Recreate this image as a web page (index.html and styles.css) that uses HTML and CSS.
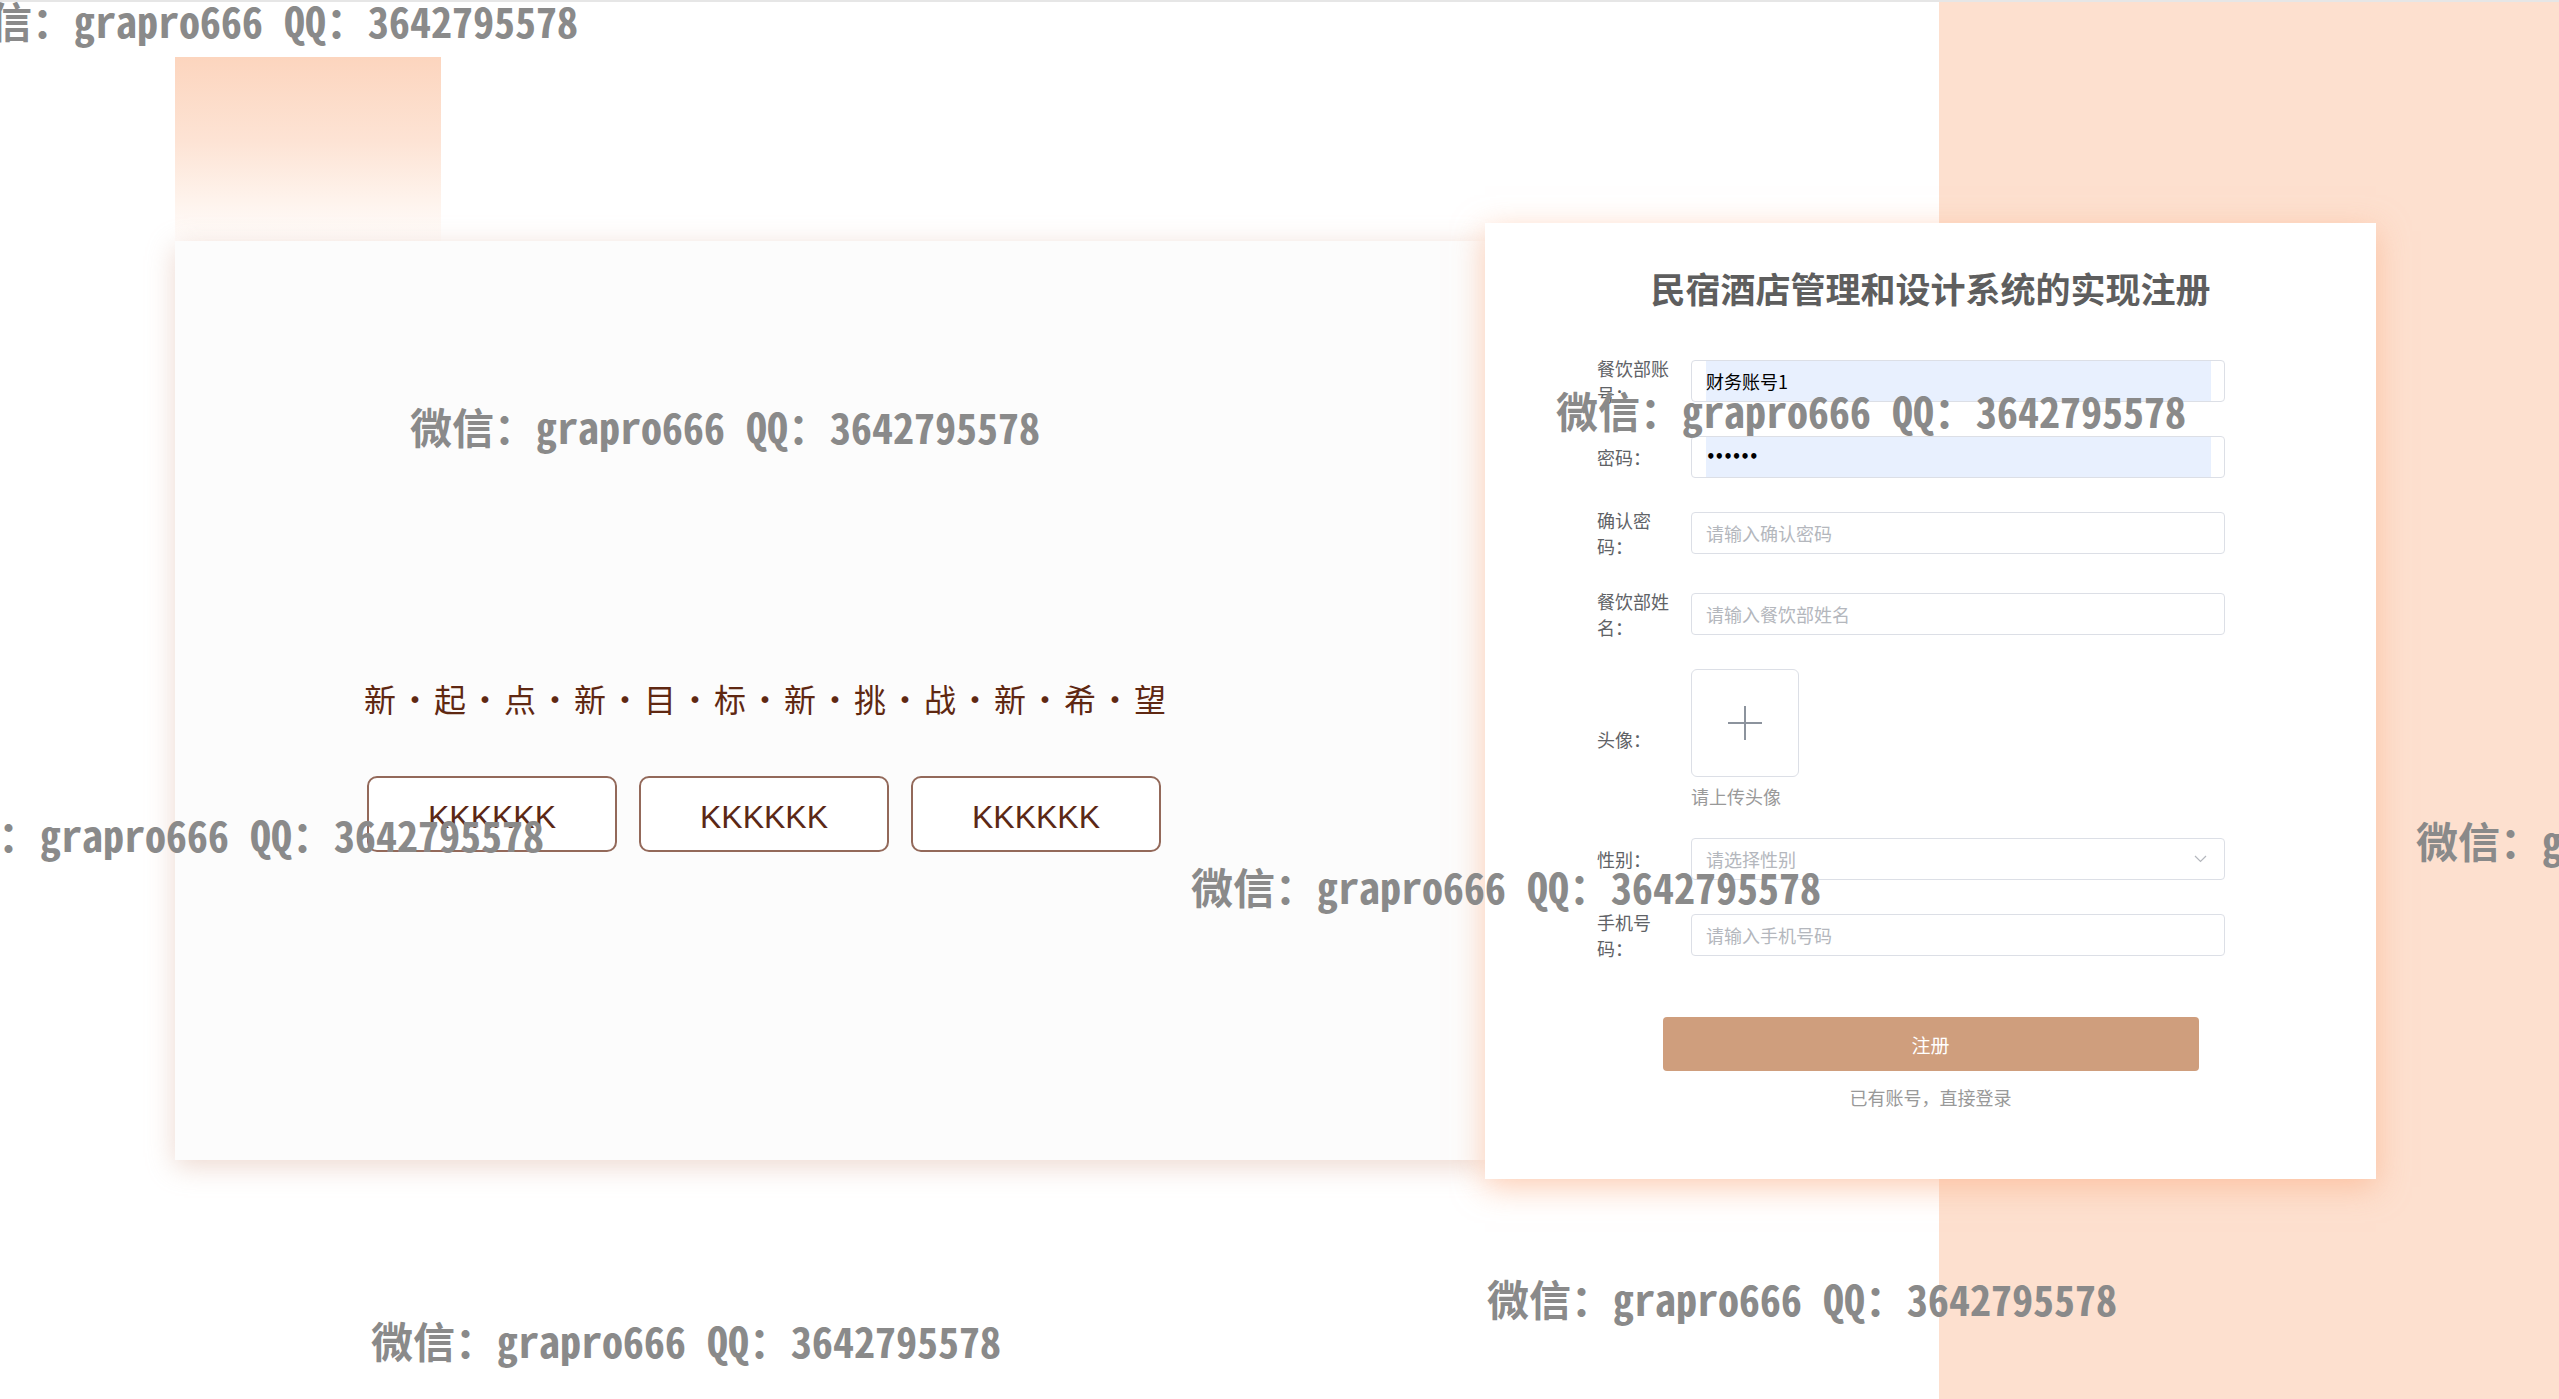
FILE: index.html
```html
<!DOCTYPE html>
<html lang="zh-CN">
<head>
<meta charset="utf-8">
<title>民宿酒店管理和设计系统的实现注册</title>
<link rel="stylesheet" href="styles.css">
</head>
<body>
<div class="page">
  <div class="row">
    <div class="left-col">
      <div class="deco"></div>
      <div class="left-card">
        <div class="slogan">新・起・点・新・目・标・新・挑・战・新・希・望</div>
        <div class="btns">
          <button class="kbtn">KKKKKK</button>
          <button class="kbtn">KKKKKK</button>
          <button class="kbtn">KKKKKK</button>
        </div>
      </div>
    </div>
    <div class="form-card">
      <h1 class="title">民宿酒店管理和设计系统的实现注册</h1>
      <div class="form">
        <div class="frow">
          <label class="flabel">餐饮部账号：</label>
          <div class="field"><span class="fill">财务账号1</span></div>
        </div>
        <div class="frow">
          <label class="flabel">密码：</label>
          <div class="field"><span class="fill dots">••••••</span></div>
        </div>
        <div class="frow">
          <label class="flabel">确认密码：</label>
          <div class="field"><span class="ph">请输入确认密码</span></div>
        </div>
        <div class="frow">
          <label class="flabel">餐饮部姓名：</label>
          <div class="field"><span class="ph">请输入餐饮部姓名</span></div>
        </div>
        <div class="frow">
          <label class="flabel">头像：</label>
          <div class="upload-wrap">
            <div class="upload">
              <svg width="36" height="36" viewBox="0 0 36 36"><path d="M18 1v34M1 18h34" stroke="#8c939d" stroke-width="2" fill="none"/></svg>
            </div>
            <div class="hint">请上传头像</div>
          </div>
        </div>
        <div class="frow">
          <label class="flabel">性别：</label>
          <div class="field select"><span class="ph">请选择性别</span>
            <svg class="chev" width="13" height="8" viewBox="0 0 13 8"><path d="M1 1l5.5 5.5L12 1" stroke="#b4b7bd" stroke-width="1.2" fill="none"/></svg>
          </div>
        </div>
        <div class="frow">
          <label class="flabel">手机号码：</label>
          <div class="field"><span class="ph">请输入手机号码</span></div>
        </div>
      </div>
      <button class="submit">注册</button>
      <div class="login-link">已有账号，直接登录</div>
    </div>
  </div>
  <div class="wm-layer">
    <div class="wm wm1">微信：grapro666 QQ：3642795578</div>
    <div class="wm wm2">微信：grapro666 QQ：3642795578</div>
    <div class="wm wm3">微信：grapro666 QQ：3642795578</div>
    <div class="wm wm4">微信：grapro666 QQ：3642795578</div>
    <div class="wm wm5">微信：grapro666 QQ：3642795578</div>
    <div class="wm wm6">微信：grapro666 QQ：3642795578</div>
    <div class="wm wm7">微信：grapro666 QQ：3642795578</div>
    <div class="wm wm8">微信：grapro666 QQ：3642795578</div>
  </div>
</div>
</body>
</html>
```

FILE: styles.css
```css
html, body {
  margin: 0;
  padding: 0;
  overflow: hidden;
}
body {
  font-family: "Noto Sans CJK SC", "Noto Sans", sans-serif;
}
.page {
  position: relative;
  box-sizing: border-box;
  height: 1399px;
  border-top: 2px solid #e6e6e6;
  padding: 55px 0 0 175px;
  background: linear-gradient(to right, #ffffff 1939px, #fde0cf 1939px);
  overflow: hidden;
}
.row {
  display: flex;
  align-items: flex-start;
}
.left-col {
  width: 1310px;
  display: flex;
  flex-direction: column;
}
.deco {
  width: 266px;
  height: 184px;
  background: linear-gradient(180deg, #fcd5be 0%, #fde3d4 45%, #fef3ec 78%, #fffdfc 100%);
}
.left-card {
  box-sizing: border-box;
  height: 919px;
  background: #fcfcfc;
  box-shadow: 0 6px 26px rgba(214, 168, 148, 0.45);
  padding: 435px 0 0 189px;
}
.slogan {
  font-size: 32px;
  line-height: 44px;
  letter-spacing: 3px;
  color: #5f2812;
  font-weight: 400;
  white-space: nowrap;
}
.btns {
  display: flex;
  gap: 22px;
  margin: 56px 0 0 3px;
}
.kbtn {
  width: 250px;
  height: 76px;
  box-sizing: border-box;
  border: 2px solid #93695a;
  border-radius: 10px;
  background: #ffffff;
  color: #5b2816;
  font-family: "Liberation Sans", Arial, sans-serif;
  font-size: 32px;
  padding: 6px 0 0;
}
.form-card {
  box-sizing: border-box;
  width: 891px;
  height: 956px;
  margin-top: 166px;
  background: #ffffff;
  box-shadow: 0 8px 30px rgba(252, 176, 136, 0.65);
  padding-top: 40px;
}
.title {
  margin: 0 0 42px;
  text-align: center;
  font-size: 35px;
  line-height: 50px;
  font-weight: 700;
  color: #5e5e5e;
}
.form {
  margin-left: 112px;
}
.frow {
  display: flex;
  align-items: center;
  margin-bottom: 29px;
}
.flabel {
  box-sizing: border-box;
  width: 94px;
  padding-right: 14px;
  font-size: 18px;
  line-height: 26px;
  color: #606266;
}
.field {
  box-sizing: border-box;
  width: 534px;
  height: 42px;
  border: 1px solid #dcdfe6;
  border-radius: 4px;
  padding: 0 13px 0 14px;
  display: flex;
  align-items: center;
  font-size: 18px;
  position: relative;
}
.fill {
  display: flex;
  align-items: center;
  width: 100%;
  height: 100%;
  background: #e8f0fe;
  color: #000;
}
.dots {
  font-size: 15px;
  font-weight: 700;
  letter-spacing: -1px;
  font-family: "DejaVu Sans", sans-serif;
}
.ph {
  color: #b4b7bd;
}
.select .chev {
  position: absolute;
  right: 17px;
  top: 16px;
}
.upload-wrap {
  display: flex;
  flex-direction: column;
}
.upload {
  box-sizing: border-box;
  width: 108px;
  height: 108px;
  border: 1px solid #dcdfe6;
  border-radius: 6px;
  display: flex;
  align-items: center;
  justify-content: center;
}
.hint {
  margin-top: 6px;
  font-size: 18px;
  line-height: 26px;
  color: #999;
}
.submit {
  display: block;
  width: 536px;
  height: 54px;
  margin: 56px auto 0;
  border: none;
  border-radius: 4px;
  background: #cf9e7d;
  color: #ffffff;
  font-family: "Noto Sans CJK SC", sans-serif;
  font-size: 19px;
}
.login-link {
  margin-top: 13px;
  text-align: center;
  font-size: 18px;
  line-height: 26px;
  color: #999;
}
.wm-layer {
  position: absolute;
  inset: 0;
  pointer-events: none;
}
.wm {
  position: absolute;
  white-space: nowrap;
  font-family: "Noto Sans Mono CJK SC", "DejaVu Sans Mono", monospace;
  font-size: 42px;
  line-height: 42px;
  font-weight: 700;
  color: #8a8a8a;
}
.wm1 { left: -52px; top: -3px; }
.wm2 { left: 410px; top: 403px; }
.wm3 { left: 1556px; top: 387px; }
.wm4 { left: -86px; top: 811px; }
.wm5 { left: 1191px; top: 863px; }
.wm6 { left: 2416px; top: 817px; }
.wm7 { left: 371px; top: 1317px; }
.wm8 { left: 1487px; top: 1275px; }
```
